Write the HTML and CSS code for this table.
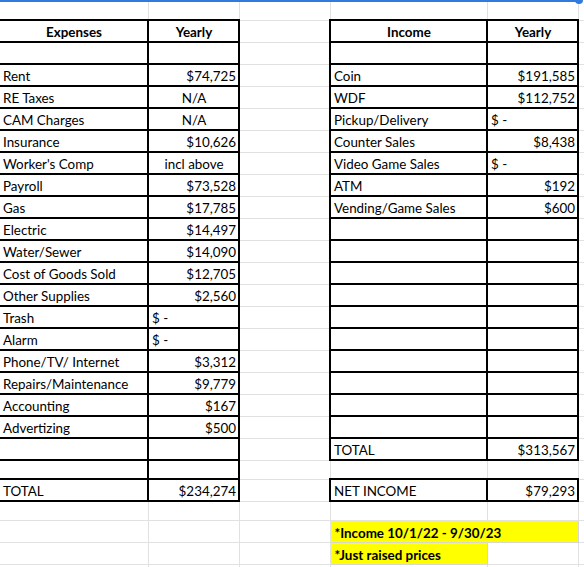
FILE: index.html
```html
<!DOCTYPE html>
<html>
<head>
<meta charset="utf-8">
<link rel="stylesheet" href="styles.css">
</head>
<body>
<div class="wrap">
<table class="sheet">
<colgroup>
<col class="ca"><col class="cb"><col class="cc"><col class="cd"><col class="ce"><col class="cf">
</colgroup>
<tr class="top"><td></td><td></td><td></td><td></td><td></td><td></td></tr>
<tr><td class="k h">Expenses</td><td class="k h">Yearly</td><td></td><td class="k h">Income</td><td class="k h">Yearly</td><td></td></tr>
<tr><td class="k"></td><td class="k"></td><td></td><td class="k"></td><td class="k"></td><td></td></tr>
<tr><td class="k">Rent</td><td class="k r">$74,725</td><td></td><td class="k">Coin</td><td class="k r">$191,585</td><td></td></tr>
<tr><td class="k">RE Taxes</td><td class="k c">N/A</td><td></td><td class="k">WDF</td><td class="k r">$112,752</td><td></td></tr>
<tr><td class="k">CAM Charges</td><td class="k c">N/A</td><td></td><td class="k">Pickup/Delivery</td><td class="k">$ -</td><td></td></tr>
<tr><td class="k">Insurance</td><td class="k r">$10,626</td><td></td><td class="k">Counter Sales</td><td class="k r">$8,438</td><td></td></tr>
<tr><td class="k">Worker's Comp</td><td class="k c">incl above</td><td></td><td class="k">Video Game Sales</td><td class="k">$ -</td><td></td></tr>
<tr><td class="k">Payroll</td><td class="k r">$73,528</td><td></td><td class="k">ATM</td><td class="k r">$192</td><td></td></tr>
<tr><td class="k">Gas</td><td class="k r">$17,785</td><td></td><td class="k">Vending/Game Sales</td><td class="k r">$600</td><td></td></tr>
<tr><td class="k">Electric</td><td class="k r">$14,497</td><td></td><td class="k"></td><td class="k"></td><td></td></tr>
<tr><td class="k">Water/Sewer</td><td class="k r">$14,090</td><td></td><td class="k"></td><td class="k"></td><td></td></tr>
<tr><td class="k">Cost of Goods Sold</td><td class="k r">$12,705</td><td></td><td class="k"></td><td class="k"></td><td></td></tr>
<tr><td class="k">Other Supplies</td><td class="k r">$2,560</td><td></td><td class="k"></td><td class="k"></td><td></td></tr>
<tr><td class="k">Trash</td><td class="k">$ -</td><td></td><td class="k"></td><td class="k"></td><td></td></tr>
<tr><td class="k">Alarm</td><td class="k">$ -</td><td></td><td class="k"></td><td class="k"></td><td></td></tr>
<tr><td class="k">Phone/TV/ Internet</td><td class="k r">$3,312</td><td></td><td class="k"></td><td class="k"></td><td></td></tr>
<tr><td class="k">Repairs/Maintenance</td><td class="k r">$9,779</td><td></td><td class="k"></td><td class="k"></td><td></td></tr>
<tr><td class="k">Accounting</td><td class="k r">$167</td><td></td><td class="k"></td><td class="k"></td><td></td></tr>
<tr><td class="k">Advertizing</td><td class="k r">$500</td><td></td><td class="k"></td><td class="k"></td><td></td></tr>
<tr><td class="k"></td><td class="k"></td><td></td><td class="k">TOTAL</td><td class="k r">$313,567</td><td></td></tr>
<tr class="short"><td class="k"></td><td class="k"></td><td></td><td></td><td></td><td></td></tr>
<tr><td class="k">TOTAL</td><td class="k r">$234,274</td><td></td><td class="k">NET INCOME</td><td class="k r">$79,293</td><td></td></tr>
<tr class="short"><td></td><td></td><td></td><td></td><td></td><td></td></tr>
<tr><td></td><td></td><td></td><td class="y" colspan="2">*Income 10/1/22 - 9/30/23</td><td></td></tr>
<tr><td></td><td></td><td></td><td class="y">*Just raised prices</td><td></td><td></td></tr>
<tr><td></td><td></td><td></td><td></td><td></td><td></td></tr>
</table>
<div class="sel"></div>
<div class="dot"></div>
</div>
</body>
</html>
```
FILE: styles.css
```css
html, body {
  margin: 0;
  padding: 0;
  background: #fff;
  overflow: hidden;
}
.wrap {
  position: relative;
  width: 584px;
  height: 567px;
  overflow: hidden;
}
.sheet {
  border-collapse: collapse;
  table-layout: fixed;
  width: 598px;
  font-family: Lato, "Liberation Sans", sans-serif;
  font-size: 13.4px;
  color: #000;
}
.ca { width: 148px; }
.cb { width: 91px; }
.cc { width: 91px; }
.cd { width: 157px; }
.ce { width: 91px; }
.cf { width: 20px; }
.sheet tr { height: 22px; }
.sheet tr.top { height: 20px; }
.sheet tr.short { height: 19px; }
.sheet td {
  border: 1px solid #e1e1e1;
  padding: 0 2px 0 3px;
  vertical-align: bottom;
  line-height: 17px;
  white-space: nowrap;
  overflow: hidden;
}
.sheet tr.top td { border-top: 0; }
.sheet td.k { border: 2px solid #000; }
.sheet td:first-child { border-left: 0; }
.h { font-weight: bold; text-align: center; }
.r { text-align: right; }
.c { text-align: center; }
.sheet td.y {
  background: #ffff00;
  font-weight: bold;
  padding-left: 4px;
  border-color: #d6d6d6;
}
.sel {
  position: absolute;
  left: 0;
  top: 0;
  width: 579px;
  height: 2px;
  background: #2f7be0;
}
.dot {
  position: absolute;
  left: 575px;
  top: -4px;
  width: 8px;
  height: 8px;
  border-radius: 50%;
  background: #2f7be0;
}
```
